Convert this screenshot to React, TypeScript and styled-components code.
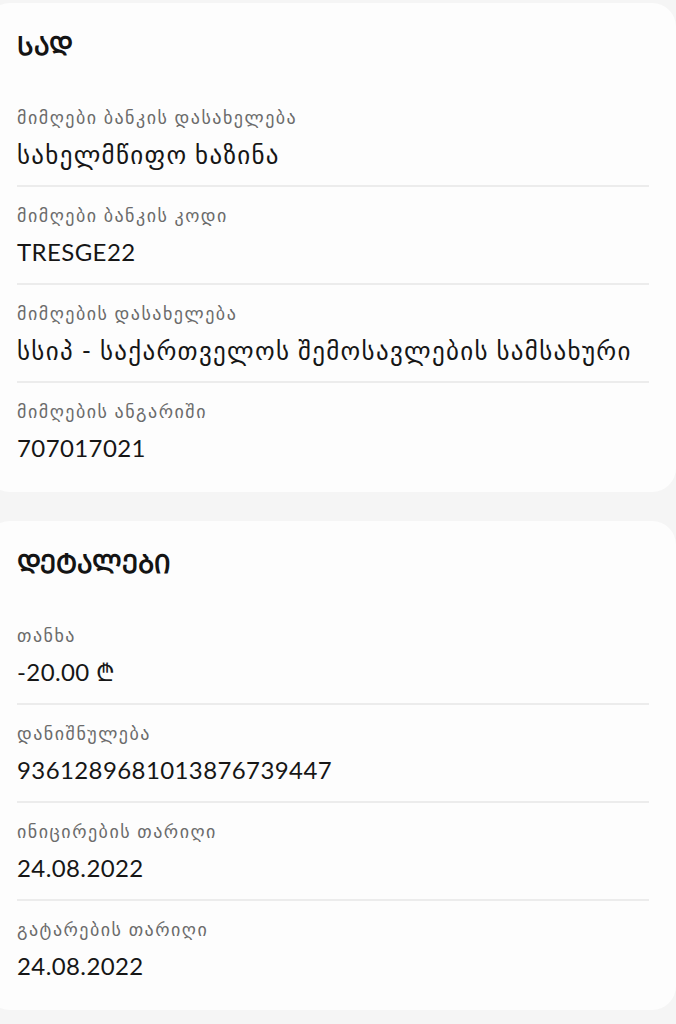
import React from "react"
import styled, { createGlobalStyle } from "styled-components"

const GlobalStyle = createGlobalStyle`
  html, body {
    margin: 0;
    padding: 0;
    background: #f5f5f5;
  }
  body {
    font-family: Lato, "DejaVu Sans", sans-serif;
    -webkit-font-smoothing: antialiased;
  }
`

interface Field {
  label: string
  value: string
  georgian?: boolean
}

const whereFields: Field[] = [
  { label: "მიმღები ბანკის დასახელება", value: "სახელმწიფო ხაზინა", georgian: true },
  { label: "მიმღები ბანკის კოდი", value: "TRESGE22" },
  {
    label: "მიმღების დასახელება",
    value: "სსიპ - საქართველოს შემოსავლების სამსახური",
    georgian: true,
  },
  { label: "მიმღების ანგარიში", value: "707017021" },
]

const detailFields: Field[] = [
  { label: "თანხა", value: "-20.00 ₾" },
  { label: "დანიშნულება", value: "9361289681013876739447" },
  { label: "ინიცირების თარიღი", value: "24.08.2022" },
  { label: "გატარების თარიღი", value: "24.08.2022" },
]

const Page = styled.div`
  display: flex;
  flex-direction: column;
  gap: 29px;
  padding-top: 3px;
  overflow: hidden;
  min-height: 1021px;
`

const Card = styled.section`
  margin-left: -14px;
  padding: 26px 27px 13px 31px;
  background: #fdfdfd;
  border-radius: 24px;
`

const Title = styled.h2`
  margin: 0 0 28px;
  font-size: 26px;
  line-height: 32px;
  font-weight: 700;
  color: #141414;
`

const Row = styled.div`
  padding: 16px 0 15px;
  border-bottom: 2px solid #ececec;

  &:last-child {
    border-bottom: none;
  }
`

const Label = styled.div`
  font-size: 18px;
  line-height: 24px;
  letter-spacing: 1.5px;
  color: #6b6b6b;
  margin-bottom: 9px;
`

const Value = styled.div<{ $georgian?: boolean }>`
  font-size: ${(p) => (p.$georgian ? "25px" : "24px")};
  letter-spacing: ${(p) => (p.$georgian ? "1.3px" : "0.4px")};
  line-height: 32px;
  color: #161616;
  white-space: nowrap;
`

const InfoCard: React.FC<{ title: string; fields: Field[] }> = ({ title, fields }) => (
  <Card>
    <Title>{title}</Title>
    {fields.map((f) => (
      <Row key={f.label}>
        <Label>{f.label}</Label>
        <Value $georgian={f.georgian}>{f.value}</Value>
      </Row>
    ))}
  </Card>
)

export default function App() {
  return (
    <>
      <GlobalStyle />
      <Page>
        <InfoCard title="ᲡᲐᲓ" fields={whereFields} />
        <InfoCard title="ᲓᲔᲢᲐᲚᲔᲑᲘ" fields={detailFields} />
      </Page>
    </>
  )
}
